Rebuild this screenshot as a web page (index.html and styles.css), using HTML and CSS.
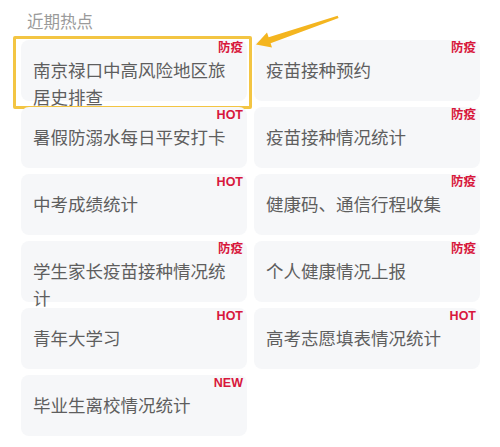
FILE: index.html
```html
<!DOCTYPE html>
<html lang="zh-CN">
<head>
    <meta charset="UTF-8">
    <meta name="viewport" content="width=device-width, initial-scale=1.0">
    <title>近期热点</title>
    <link rel="stylesheet" href="styles.css">
</head>
<body>

    <div class="page">
        <h2 class="section-title">近期热点</h2>

        <div class="hot-grid">
            <div class="card highlighted">
                <span class="tag">防疫</span>
                南京禄口中高风险地区旅居史排查
                <span class="mark-box"></span>
            </div>
            <div class="card"><span class="tag">防疫</span>疫苗接种预约</div>
            <div class="card"><span class="tag">HOT</span>暑假防溺水每日平安打卡</div>
            <div class="card"><span class="tag">防疫</span>疫苗接种情况统计</div>
            <div class="card"><span class="tag">HOT</span>中考成绩统计</div>
            <div class="card"><span class="tag">防疫</span>健康码、通信行程收集</div>
            <div class="card"><span class="tag">防疫</span>学生家长疫苗接种情况统计</div>
            <div class="card"><span class="tag">防疫</span>个人健康情况上报</div>
            <div class="card"><span class="tag">HOT</span>青年大学习</div>
            <div class="card"><span class="tag">HOT</span>高考志愿填表情况统计</div>
            <div class="card"><span class="tag">NEW</span>毕业生离校情况统计</div>
        </div>
    </div>

    <!-- annotation arrow pointing at the first card -->
    <svg class="arrow" width="500" height="60" viewBox="0 0 500 60">
        <polygon points="256,44.5 272,47.5 270.6,43.2 338.6,18 337.6,15.8 268.6,37.2 267,32.4" fill="#f4b51f"/>
    </svg>

</body>
</html>
```

FILE: styles.css
```css
body {
    margin: 0;
    background-color: #fff;
    font-family: "Noto Sans CJK SC", "Noto Sans", sans-serif;
    color: #5e5e5e;
}
.page {
    position: relative;
    padding: 11px 20px 0 21px;
}
.section-title {
    margin: 0 0 9px 0;
    padding-left: 6px;
    font-size: 16.5px;
    line-height: 20px;
    font-weight: normal;
    color: #9a9a9a;
}
.hot-grid {
    display: grid;
    grid-template-columns: 226px 226px;
    grid-auto-rows: 61px;
    column-gap: 7px;
    row-gap: 6px;
}
.card {
    position: relative;
    box-sizing: border-box;
    padding: 17px 20px 0 12px;
    background-color: #f6f7f9;
    border-radius: 8px;
    font-size: 17.5px;
    line-height: 26.5px;
    color: #5e5e5e;
}
.tag {
    position: absolute;
    top: 1px;
    right: 4px;
    font-family: "Liberation Sans", "Noto Sans CJK SC", sans-serif;
    font-size: 12.5px;
    line-height: 14px;
    font-weight: bold;
    color: #d8173c;
}
/* yellow annotation frame round the first card */
.mark-box {
    position: absolute;
    top: -4px;
    left: -8px;
    right: -5px;
    bottom: -8px;
    border: 3px solid #f3c543;
    border-radius: 2px;
}
.arrow {
    position: absolute;
    top: 0;
    left: 0;
}
```
